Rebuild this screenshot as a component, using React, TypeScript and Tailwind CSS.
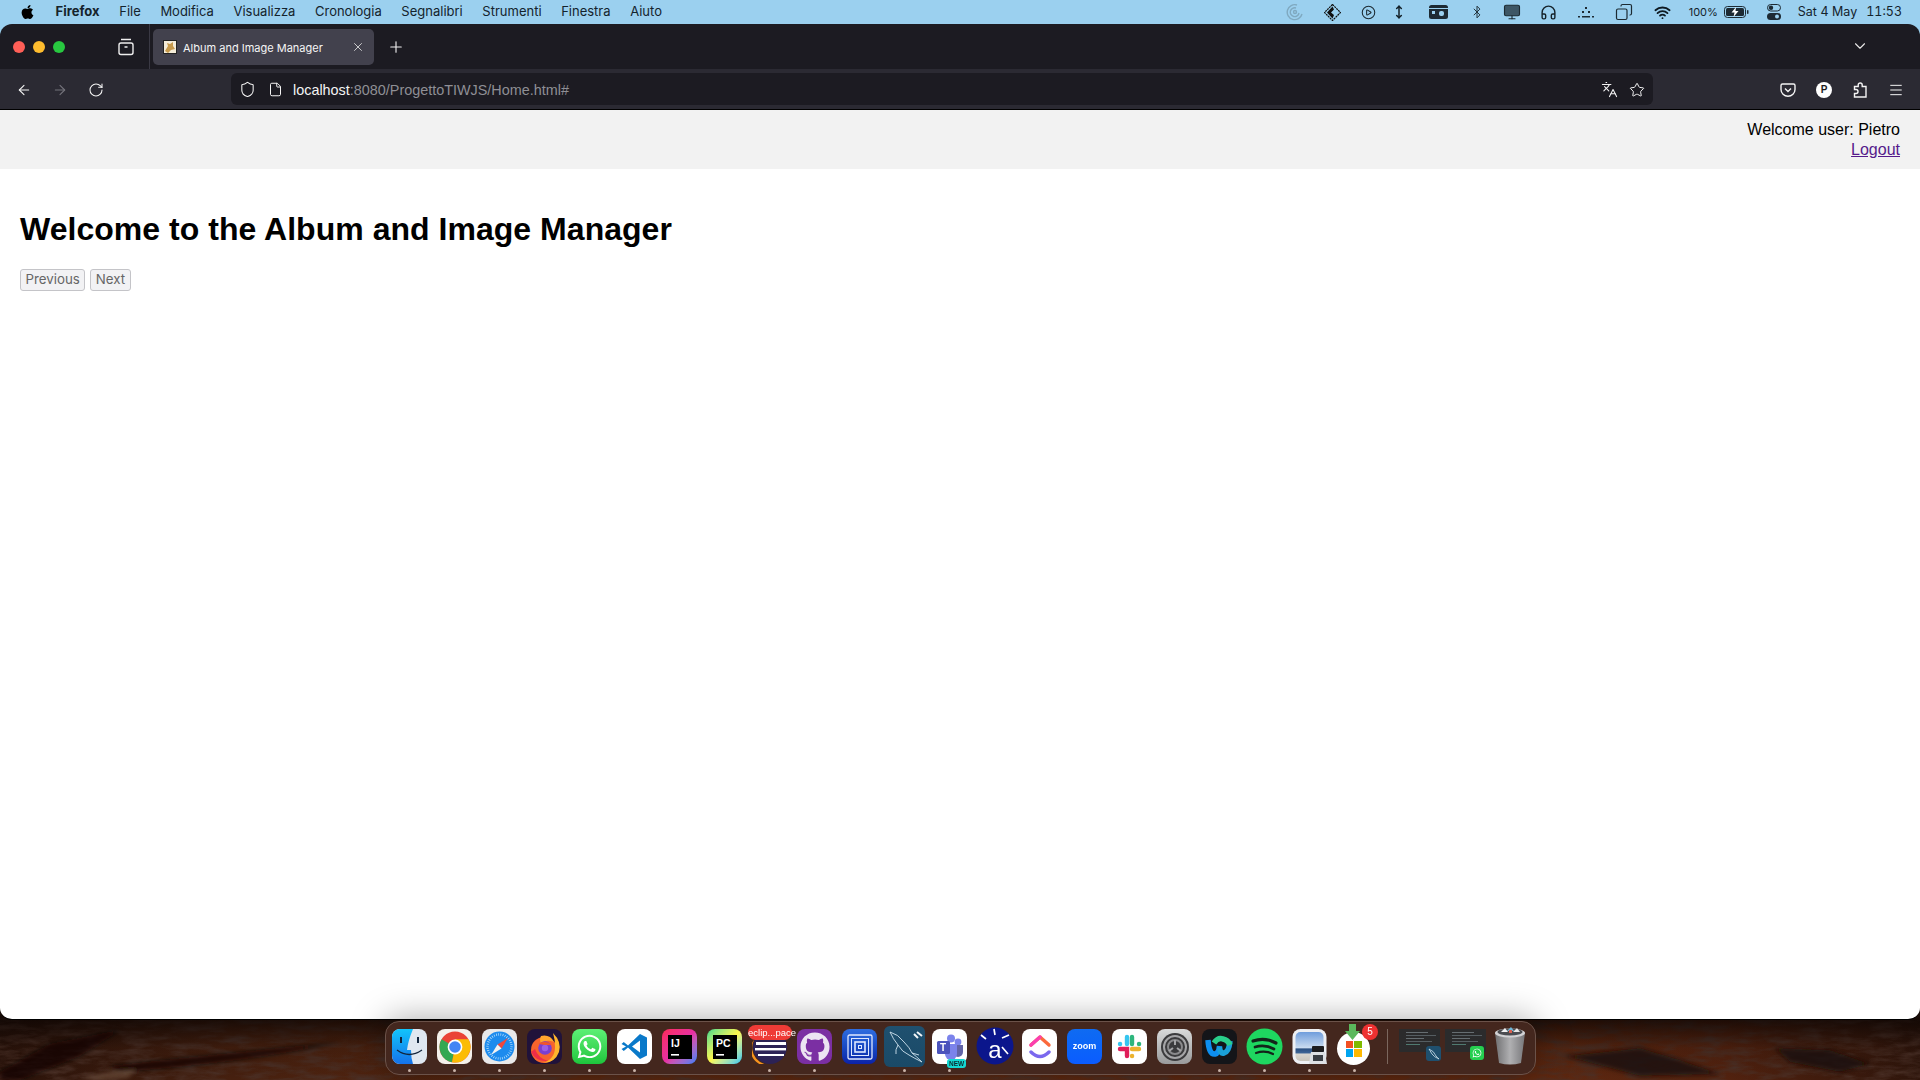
import type { ReactNode } from "react";
import {
  ArrowLeft,
  ArrowRight,
  Bluetooth,
  ChevronDown,
  CirclePlay,
  Copy,
  File,
  Headphones,
  Languages,
  Menu,
  Monitor,
  MoveVertical,
  Plus,
  RotateCw,
  Shield,
  Star,
  Wifi,
  X,
} from "lucide-react";
import { FaApple, FaGithub, FaWhatsapp } from "react-icons/fa";

const Wallpaper = () => (
  <svg className="absolute left-0 top-[1000px] h-[80px] w-[1920px]" viewBox="0 0 1920 80">
    <defs>
      <linearGradient id="rock" x1="0" y1="0" x2="1" y2="0">
        <stop offset="0" stopColor="#2a130a" />
        <stop offset="0.12" stopColor="#46200f" />
        <stop offset="0.3" stopColor="#5c2810" />
        <stop offset="0.8" stopColor="#5f2810" />
        <stop offset="0.9" stopColor="#52220f" />
        <stop offset="1" stopColor="#2e150b" />
      </linearGradient>
      <linearGradient id="shade" x1="0" y1="0" x2="0" y2="1">
        <stop offset="0.25" stopColor="#0c0503" stopOpacity="0.75" />
        <stop offset="0.6" stopColor="#0c0503" stopOpacity="0.15" />
        <stop offset="1" stopColor="#0c0503" stopOpacity="0" />
      </linearGradient>
      <filter id="grain">
        <feTurbulence type="fractalNoise" baseFrequency="0.04 0.16" numOctaves="5" seed="8" />
        <feColorMatrix values="0 0 0 0 0.07  0 0 0 0 0.03  0 0 0 0 0.02  2.2 0 0 0 -0.85" />
      </filter>
      <filter id="soft">
        <feGaussianBlur stdDeviation="2" />
      </filter>
    </defs>
    <rect width="1920" height="80" fill="url(#rock)" />
    <rect width="1920" height="80" filter="url(#grain)" />
    <rect width="1920" height="80" fill="url(#shade)" />
    <g filter="url(#soft)">
      <path d="M0 72 L50 44 L120 30 L80 56 L20 80 L0 80Z" fill="#120806" opacity="0.7" />
      <path d="M120 72 Q250 62 340 42 Q220 54 110 66Z" fill="#140905" opacity="0.7" />
      <path d="M80 78 L110 72 L136 70 L128 78 L100 80Z" fill="#7a5c48" opacity="0.55" />
      <path d="M1565 56 L1640 48 L1680 60 L1720 74 L1640 76Z" fill="#1b0d09" opacity="0.8" />
      <path d="M1775 48 L1830 50 L1870 64 L1840 72 L1790 62Z" fill="#1b0d09" opacity="0.8" />
    </g>
  </svg>
);

const MenuBar = () => (
  <div className="flex h-6 items-center justify-between pl-5 pr-[18px] text-[13px] text-[#14232c]">
    <div className="flex items-center gap-[19.6px]">
      <FaApple className="mr-[1px] h-[16px] w-[15px] text-black" />
      <span className="font-bold">Firefox</span>
      {["File", "Modifica", "Visualizza", "Cronologia", "Segnalibri", "Strumenti", "Finestra", "Aiuto"].map((m) => (
        <span key={m}>{m}</span>
      ))}
    </div>
    <div className="flex items-center">
      <svg className="mr-[20px] h-[18px] w-[18px] text-[#7fa9c0]" viewBox="0 0 18 18" fill="none" stroke="currentColor" strokeWidth="1.4">
        <path d="M16 11a7.5 7.5 0 1 1 -5-9" />
        <path d="M13 10a4.4 4.4 0 1 1 -3-5" />
        <circle cx="9" cy="9" r="1.5" />
      </svg>
      <svg className="mr-[20px] h-[17px] w-[17px]" viewBox="0 0 17 17">
        <path d="M8.5 0.5 L16.5 8.5 L8.5 16.5 L0.5 8.5Z" fill="none" stroke="#101010" strokeWidth="1.2" strokeDasharray="2 0.7" />
        <path d="M8.5 2.5 L3 8.5 L8.5 14.5 L10 11 L7 8.5 L10 5.5Z" fill="#101010" />
      </svg>
      <CirclePlay className="mr-[16px] h-[15px] w-[15px] text-[#1c2a32]" strokeWidth={1.7} />
      <MoveVertical className="mr-[23px] h-[18px] w-[14px] text-[#15222a]" strokeWidth={2.6} />
      <svg className="mr-[22px] h-[16px] w-[19px]" viewBox="0 0 19 16">
        <rect y="1" width="19" height="14" rx="2.5" fill="#1d2a33" />
        <rect x="3" y="7" width="3" height="3" fill="#9bd0ef" />
        <rect x="10" y="7" width="5" height="5" rx="2" fill="#9bd0ef" />
        <rect y="4" width="19" height="1" fill="#9bd0ef" />
      </svg>
      <Bluetooth className="mr-[19px] h-[18px] w-[14px] text-[#1c2a32]" strokeWidth={1.6} />
      <Monitor className="mr-[19px] h-[18px] w-[18px] fill-[#3d5665] text-[#1c2a32]" strokeWidth={1.5} />
      <Headphones className="mr-[20px] h-[17px] w-[17px] text-[#15222a]" strokeWidth={2} />
      <svg className="mr-[20px] h-[14px] w-[18px]" viewBox="0 0 18 14" fill="#1d2a33">
        <rect x="8" y="2" width="2" height="2" />
        <rect x="5" y="6" width="2" height="2" />
        <rect x="11" y="6" width="2" height="2" />
        <rect x="1" y="11" width="2" height="1.5" />
        <rect x="5" y="11" width="8" height="1.5" />
        <rect x="15" y="11" width="2" height="1.5" />
      </svg>
      <Copy className="mr-[21px] h-[18px] w-[18px] -scale-x-100 text-[#1c2a32]" strokeWidth={1.6} />
      <Wifi className="mr-[18px] h-[17px] w-[17px] text-[#0e1a22]" strokeWidth={2.6} />
      <span className="mr-[6px] text-[11px]">100%</span>
      <svg className="mr-[18px] h-[12px] w-[25px]" viewBox="0 0 25 12">
        <rect x="0.5" y="0.5" width="21" height="11" rx="3" fill="none" stroke="#1d2a33" />
        <rect x="2" y="2" width="18" height="8" rx="1.5" fill="#1d2a33" />
        <path d="M12 1 L7.5 6.5 H10.5 L9.5 11 L14.5 5 H11.5Z" fill="#fff" />
        <rect x="23" y="4" width="1.5" height="4" rx="0.7" fill="#1d2a33" />
      </svg>
      <svg className="mr-[17px] h-[16px] w-[14px]" viewBox="0 0 14 16">
        <rect x="0.5" y="0.5" width="13" height="6.5" rx="3.2" fill="none" stroke="#1d2a33" />
        <circle cx="4" cy="3.7" r="2.2" fill="#1d2a33" />
        <rect y="9" width="14" height="7" rx="3.5" fill="#1d2a33" />
        <circle cx="10" cy="12.5" r="2" fill="#9bd0ef" />
      </svg>
      <span className="mr-[9px] text-[12.5px]">Sat 4 May</span>
      <span className="text-[12.5px] tabular-nums">11:53</span>
    </div>
  </div>
);

const TabStrip = () => (
  <div className="flex h-[45px] items-center bg-[#1c1b22] pt-[1px] text-white">
    <div className="flex w-[126px] gap-2 pl-[13px]">
      <span className="h-3 w-3 rounded-full bg-[#ff5f57]" />
      <span className="h-3 w-3 rounded-full bg-[#febc2e]" />
      <span className="h-3 w-3 rounded-full bg-[#28c840]" />
    </div>
    <svg className="mr-[14px] h-[18px] w-[18px] -translate-x-[9px]" viewBox="0 0 18 18" fill="none" stroke="#eee" strokeWidth="1.4">
      <path d="M4 1.5 H14" />
      <rect x="2" y="5" width="14" height="11.5" rx="2" />
      <path d="M7.5 9 H10.5" />
    </svg>
    <div className="-mt-[1px] h-[45px] w-px -translate-x-[9px] bg-[#3a3944]" />
    <div className="ml-[-6px] flex h-9 w-[221px] items-center rounded-[5px] bg-[#42414d] pl-[10px] pr-[9px]">
      <svg className="h-[14px] w-[14px] shrink-0" viewBox="0 0 14 14">
        <rect width="14" height="14" fill="#f4ecd8" />
        <path d="M2 11 L5 6 L4 3 L7 4 L10 2 L10 6 L12 9 L8 10 L5 13Z" fill="#c79a4b" />
        <rect x="0.5" y="0.5" width="13" height="13" fill="none" stroke="#222" />
      </svg>
      <span className="ml-[6px] flex-1 translate-y-[1px] text-[11px] text-[#f5f5f5]">Album and Image Manager</span>
      <X className="h-[14px] w-[14px] text-[#e8e8e8]" strokeWidth={1.4} />
    </div>
    <Plus className="ml-[13px] h-[18px] w-[18px] text-[#f0f0f0]" strokeWidth={1.5} />
    <div className="flex-1" />
    <ChevronDown className="mr-[51px] h-[18px] w-[18px] -translate-y-[1px] text-[#e8e8e8]" strokeWidth={1.5} />
  </div>
);

const Toolbar = () => (
  <div className="flex h-10 items-center bg-[#2b2a33] text-[#f4f4f4]">
    <div className="flex w-[231px] items-center gap-[20px] pl-[16px] pt-[1px]">
      <ArrowLeft className="h-4 w-4" strokeWidth={1.6} />
      <ArrowRight className="h-4 w-4 text-[#75747c]" strokeWidth={1.6} />
      <RotateCw className="h-4 w-4" strokeWidth={1.6} />
    </div>
    <div className="flex h-8 w-[1422px] items-center rounded-[6px] bg-[#1c1b22] pl-[8px] pr-[8px] pt-[1px]">
      <Shield className="h-[17px] w-[17px]" strokeWidth={1.5} />
      <File className="ml-[12px] h-[15px] w-[15px]" strokeWidth={1.6} />
      <span className="ml-[10px] flex-1 translate-y-[1px] text-[14.4px] leading-none">
        localhost<span className="text-[#8f8f95]">:8080/ProgettoTIWJS/Home.html#</span>
      </span>
      <Languages className="h-[17px] w-[17px]" strokeWidth={1.5} />
      <Star className="ml-[11px] h-4 w-4" strokeWidth={1.5} />
    </div>
    <div className="flex flex-1 items-center justify-end gap-[20px] pr-[16px] pt-[1px]">
      <svg className="h-4 w-4" viewBox="0 0 16 16" fill="none" stroke="#f4f4f4" strokeWidth="1.4">
        <path d="M2.5 2 H13.5 A1.5 1.5 0 0 1 15 3.5 V7.5 A7 6.8 0 0 1 1 7.5 V3.5 A1.5 1.5 0 0 1 2.5 2Z" />
        <path d="M5 6.5 L8 9.5 L11 6.5" />
      </svg>
      <div className="flex h-4 w-4 items-center justify-center rounded-full bg-white text-[10px] font-bold text-[#1c1b22]">P</div>
      <svg className="h-4 w-4" viewBox="0 0 16 16" fill="none" stroke="#f4f4f4" strokeWidth="1.4">
        <path d="M6.2 4.5 V3 a2 2 0 0 1 4 0 V4.5 H14 V15 H2.5 V11.5 H4 a2 2 0 0 0 0-4 H2.5 V4.5Z" />
      </svg>
      <Menu className="h-4 w-4" strokeWidth={1.5} />
    </div>
  </div>
);

const PageButton = ({ label }: { label: string }) => (
  <button
    className="h-[22px] rounded-[3px] border border-[#c4c4c8] bg-[#f2f2f4] px-[4.5px] text-[13.3px] leading-none text-[#666]"
    style={{ fontFamily: "Inter, sans-serif" }}
  >
    {label}
  </button>
);

const Page = () => (
  <div className="flex-1 bg-white text-black">
    <div className="bg-[#f2f2f2] px-5 pb-[9px] pt-[10px] text-right text-base leading-5">
      <div>Welcome user: Pietro</div>
      <a href="#" className="text-[#551a8b] underline">
        Logout
      </a>
    </div>
    <div className="px-5">
      <h1 className="mt-[42px] text-[32px] font-bold leading-[37px] tracking-[0.03px]">
        Welcome to the Album and Image Manager
      </h1>
      <div className="mt-[21px] flex gap-[5px]">
        <PageButton label="Previous" />
        <PageButton label="Next" />
      </div>
    </div>
  </div>
);

const Tile = ({ className, children }: { className: string; children?: ReactNode }) => (
  <div className={`relative flex h-[35px] w-[35px] items-center justify-center overflow-hidden rounded-[8px] ${className}`}>
    {children}
  </div>
);

const Finder = () => (
  <svg className="h-[35px] w-[35px]" viewBox="0 0 35 35">
    <defs>
      <linearGradient id="finderL" x1="0" y1="0" x2="0" y2="1">
        <stop offset="0" stopColor="#12c4fb" />
        <stop offset="1" stopColor="#1572ea" />
      </linearGradient>
    </defs>
    <rect width="35" height="35" rx="8" fill="#dfe7f0" />
    <path d="M8 0 H21 Q16 12 15 21 H19 Q19 29 21 35 H8 A8 8 0 0 1 0 27 V8 A8 8 0 0 1 8 0Z" fill="url(#finderL)" />
    <rect x="8" y="8" width="2" height="6" fill="#12253d" />
    <rect x="25" y="8" width="2" height="6" fill="#12253d" />
    <path d="M5 21 Q17 30 30 21" fill="none" stroke="#12253d" strokeWidth="1.3" />
  </svg>
);

const Chrome = () => (
  <Tile className="bg-[#f4f0ea]">
    <svg className="h-[32px] w-[32px]" viewBox="0 0 32 32">
      <circle cx="16" cy="16" r="15.5" fill="#ea4335" />
      <path d="M16 16 L2.6 8.2 A15.5 15.5 0 0 0 13 31.2Z" fill="#34a853" />
      <path d="M16 16 L13 31.2 A15.5 15.5 0 0 0 29.4 8.2 L16 8.2Z" fill="#fbbc04" />
      <circle cx="16" cy="16" r="7.4" fill="#fff" />
      <circle cx="16" cy="16" r="5.8" fill="#4285f4" />
    </svg>
  </Tile>
);

const Safari = () => (
  <Tile className="bg-[#e9e9ea]">
    <svg className="h-[31px] w-[31px]" viewBox="0 0 31 31">
      <circle cx="15.5" cy="15.5" r="15" fill="#1d8bee" />
      <circle cx="15.5" cy="15.5" r="12" fill="none" stroke="#bfe2fb" strokeWidth="2.4" strokeDasharray="0.7 1.5" />
      <path d="M24 7 L13.5 13.5 L17.5 17.5Z" fill="#f2473c" />
      <path d="M7 24 L13.5 13.5 L17.5 17.5Z" fill="#f2f2f2" />
    </svg>
  </Tile>
);

const Firefox = () => (
  <Tile className="bg-[#20123a]">
    <svg className="h-[34px] w-[34px]" viewBox="0 0 34 34">
      <circle cx="16" cy="20" r="13" fill="#f7642c" />
      <path d="M25 3 Q34 12 31 22 Q27 33 15 33 Q27 29 27 17 Q27 9 25 3Z" fill="#ffb52d" />
      <path d="M13 6 Q22 4 26 12 Q19 9 13 13 Q11 10 13 6Z" fill="#ffa52e" />
      <circle cx="17" cy="18" r="6.8" fill="#7a3fcf" />
      <circle cx="17" cy="18" r="3.2" fill="#9a5fe6" />
      <path d="M10.5 14 Q17 9 24 15 L17 15Z" fill="#f0562c" />
      <path d="M3 22 Q8 32 20 31 Q10 28 7 19Z" fill="#ed2d48" />
    </svg>
  </Tile>
);

const VSCode = () => (
  <Tile className="bg-white">
    <svg className="h-[27px] w-[27px]" viewBox="0 0 27 27">
      <path d="M19 1 L26 4.5 V22.5 L19 26 L7 14.5 L2.8 18 L0.5 16 L5 13.5 L0.5 11 L2.8 9 L7 12.5Z M19 7.5 L11 13.5 L19 19.5Z" fill="#0a79c9" fillRule="evenodd" />
    </svg>
  </Tile>
);

const JetBrains = ({ label, colors }: { label: string; colors: string }) => (
  <div className={`relative flex h-[35px] w-[35px] items-center justify-center rounded-[8px] ${colors}`}>
    <svg className="h-[24px] w-[24px]" viewBox="0 0 24 24">
      <rect width="24" height="24" fill="#000" />
      <text x="3" y="12" fill="#fff" fontSize="10.5" fontWeight="700" fontFamily="Liberation Sans, sans-serif">
        {label}
      </text>
      <rect x="3" y="19" width="8" height="1.6" fill="#fff" />
    </svg>
  </div>
);

const Eclipse = () => (
  <div className="relative h-[35px] w-[35px]">
    <svg className="absolute left-0 top-0 h-[35px] w-[35px]" viewBox="0 0 35 35">
      <circle cx="18" cy="18" r="17" fill="#2c2255" />
      <path d="M2 11 A17 17 0 0 0 22 35 A16 16 0 0 1 2 11Z" fill="#f7941e" />
      <rect x="4" y="13" width="30" height="3" fill="#fff" />
      <rect x="3" y="19" width="31" height="2.4" fill="#fff" />
      <rect x="6" y="25" width="26" height="2" fill="#fff" />
    </svg>
    <div className="absolute -left-[4px] -right-[5px] -top-[4px] rounded-full bg-[#ef3b36] text-center text-[9.5px] leading-[15px] text-white">
      eclip...pace
    </div>
  </div>
);

const Squares = () => (
  <Tile className="bg-gradient-to-b from-[#2f6de0] to-[#0d22a8]">
    <svg className="h-[26px] w-[26px]" viewBox="0 0 26 26" fill="none" stroke="#dfe8ff">
      <rect x="1" y="1" width="24" height="24" rx="1.5" strokeWidth="1.3" />
      <rect x="4.5" y="4.5" width="17" height="17" strokeWidth="1" />
      <rect x="8" y="8" width="10" height="10" strokeWidth="1.6" />
      <rect x="11.5" y="11.5" width="3" height="3" strokeWidth="1" />
    </svg>
  </Tile>
);

const MySql = () => (
  <div className="-mx-[3px] -mt-[3px] flex h-[41px] w-[41px] items-center justify-center rounded-[6px] bg-gradient-to-b from-[#1f506f] to-[#1a4a68]">
    <svg className="h-[41px] w-[41px]" viewBox="0 0 41 41" fill="none" stroke="#cfe2ee" strokeWidth="0.9">
      <path d="M6 6 Q14 8 20 16 Q26 22 28 27 Q32 30 38 36 Q30 32 25 29 Q18 26 14 19 Q9 13 6 6Z" />
      <path d="M14 19 Q11 24 12 28" />
      <path d="M28 27 L35 29" />
      <path d="M30 8 L34 12 M33 6 L38 10" stroke="#f1f5f7" strokeWidth="2" />
    </svg>
  </div>
);

const Teams = () => (
  <div className="relative h-[35px] w-[35px]">
    <Tile className="bg-white">
      <svg className="h-[28px] w-[28px]" viewBox="0 0 28 28">
        <circle cx="22" cy="9" r="3.4" fill="#7b83eb" />
        <circle cx="15" cy="5.5" r="4" fill="#7b83eb" />
        <path d="M17 12 H27 V19 A5 5 0 0 1 17 19Z" fill="#6264a7" />
        <path d="M9 11 H21 V21 A6 6 0 0 1 9 21Z" fill="#7b83eb" />
        <rect x="1" y="8" width="13" height="13" rx="1.5" fill="#4b53bc" />
        <text x="4" y="18" fill="#fff" fontSize="10" fontWeight="700" fontFamily="Liberation Sans, sans-serif">
          T
        </text>
      </svg>
    </Tile>
    <div className="absolute -bottom-[4px] left-[15px] rounded-[3px] bg-[#13d8d2] px-[2px] text-[6.5px] font-bold leading-[9px] text-[#0b2c30]">
      NEW
    </div>
  </div>
);

const Aruba = () => (
  <svg className="-mx-[2px] -mt-[2px] h-[38px] w-[38px]" viewBox="0 0 38 38">
    <circle cx="19" cy="19" r="18.5" fill="#0b168c" />
    <path d="M18 2 L19 8 M5 8 L10 12 M33 8 L26 11 M32 27 L26 20" stroke="#fff" strokeWidth="1.7" />
    <text x="19" y="31" textAnchor="middle" fill="#fff" fontSize="24" fontFamily="Liberation Sans, sans-serif">
      a
    </text>
  </svg>
);

const ClickUp = () => (
  <Tile className="bg-white">
    <svg className="h-[26px] w-[26px]" viewBox="0 0 26 26" fill="none" strokeWidth="3.4" strokeLinejoin="round" strokeLinecap="round">
      <path d="M4 11 L13 3 L22 11" stroke="#fb6a3c" />
      <path d="M4 11 L13 3" stroke="#fb3fb0" />
      <path d="M4 18 Q13 27 22 18" stroke="#7b68ee" />
    </svg>
  </Tile>
);

const Slack = () => (
  <Tile className="bg-white">
    <svg className="h-[25px] w-[25px]" viewBox="0 0 25 25" strokeWidth="4.4" strokeLinecap="round" fill="none">
      <path d="M10 3 V10 M3 10 H3.1" stroke="#36c5f0" />
      <path d="M15 3 V10 M22 10 H22.1" stroke="#2eb67d" />
      <path d="M15 15 H22 M15 22 H15.1" stroke="#ecb22e" />
      <path d="M3 15 H10 V22" stroke="#e01e5a" />
    </svg>
  </Tile>
);

const Settings = () => (
  <Tile className="bg-gradient-to-b from-[#d9dada] to-[#9a9b9c]">
    <svg className="h-[32px] w-[32px]" viewBox="0 0 32 32" fill="none">
      <circle cx="16" cy="16" r="14" fill="#3b3b3d" />
      <circle cx="16" cy="16" r="11" stroke="#a5a5a7" strokeWidth="2" />
      <circle cx="16" cy="16" r="7" stroke="#8a8a8c" strokeWidth="2" />
      <path d="M16 9 V14 M10 20 L14 17 M22 20 L18 17" stroke="#a5a5a7" strokeWidth="2" />
    </svg>
  </Tile>
);

const Webex = () => (
  <Tile className="bg-[#141519]">
    <svg className="h-[31px] w-[31px]" viewBox="0 0 31 31" fill="none" strokeWidth="5.5">
      <path d="M4 9 Q5 24 11 23 Q15 22 15.5 15" stroke="#0d8ff0" />
      <path d="M15.5 16 Q16 23 20 22 Q25 21 26 10" stroke="#1aa0d8" />
      <path d="M10 12 Q14 6 19 8 Q24 9 26 14" stroke="#29cf8b" />
    </svg>
  </Tile>
);

const Spotify = () => (
  <svg className="-mx-[1px] -mt-[1px] h-[37px] w-[37px]" viewBox="0 0 37 37" fill="none" stroke="#13241a" strokeLinecap="round">
    <circle cx="18.5" cy="18.5" r="18" fill="#1ed760" stroke="none" />
    <path d="M7 13 Q19 9 30 15" strokeWidth="3.2" />
    <path d="M9 19 Q19 16 28 21" strokeWidth="2.7" />
    <path d="M10 25 Q19 22 27 26" strokeWidth="2.2" />
  </svg>
);

const Preview = () => (
  <svg className="h-[36px] w-[36px]" viewBox="0 0 36 36">
    <defs>
      <linearGradient id="sky" x1="0" y1="0" x2="0" y2="1">
        <stop offset="0" stopColor="#6f9ddc" />
        <stop offset="0.55" stopColor="#cbdcf0" />
        <stop offset="0.58" stopColor="#2b4f80" />
        <stop offset="0.72" stopColor="#3e6596" />
        <stop offset="0.76" stopColor="#d9d6cf" />
        <stop offset="1" stopColor="#c8c4bb" />
      </linearGradient>
    </defs>
    <rect x="0.5" y="0" width="34" height="35" rx="8" fill="#eef0f4" />
    <rect x="3.5" y="3" width="28" height="29" rx="5" fill="url(#sky)" />
    <rect x="20" y="17" width="12" height="6" rx="1" fill="#1d1d1f" />
    <path d="M19 23 H33 L35 35 H17Z" fill="#dde0e4" />
    <rect x="21" y="26" width="10" height="6" fill="#3a3e44" />
  </svg>
);

const Office = () => (
  <div className="relative h-[35px] w-[35px]">
    <div className="flex h-[33px] w-[33px] translate-y-[3px] items-center justify-center rounded-full bg-white">
      <div className="grid h-[16px] w-[16px] grid-cols-2 gap-[1px]">
        <span className="bg-[#f25022]" />
        <span className="bg-[#7fba00]" />
        <span className="bg-[#00a4ef]" />
        <span className="bg-[#ffb900]" />
      </div>
    </div>
    <svg className="absolute -top-[5px] left-[8px] h-[16px] w-[15px]" viewBox="0 0 15 16">
      <path d="M4 0 H11 V7 H15 L7.5 16 L0 7 H4Z" fill="#5bb85c" />
    </svg>
    <div className="absolute -right-[6px] -top-[5px] h-4 w-4 rounded-full bg-[#ee3131] text-center text-[10px] leading-4 text-white">5</div>
  </div>
);

const Thumb = ({ children }: { children: ReactNode }) => (
  <div className="relative h-[35px] w-[41px]">
    <div className="flex h-[23px] w-[41px] flex-col gap-[2px] bg-[#2b2b2c] py-[3px] pl-[7px]">
      <span className="h-[1px] w-[22px] bg-[#666d71]" />
      <span className="h-[1px] w-[30px] bg-[#555d61]" />
      <span className="h-[1px] w-[18px] bg-[#666d71]" />
      <span className="h-[1px] w-[26px] bg-[#555d61]" />
      <span className="h-[1px] w-[14px] bg-[#4f7a70]" />
    </div>
    {children}
  </div>
);

const Trash = () => (
  <svg className="-mt-[3px] h-[39px] w-[32px]" viewBox="0 0 32 39">
    <defs>
      <linearGradient id="bin" x1="0" y1="0" x2="1" y2="0">
        <stop offset="0" stopColor="#6f6f71" />
        <stop offset="0.5" stopColor="#b0b0b2" />
        <stop offset="1" stopColor="#77777a" />
      </linearGradient>
    </defs>
    <path d="M1 7 H31 L27 37 Q16 40 5 37Z" fill="url(#bin)" />
    <ellipse cx="16" cy="7" rx="15" ry="4.5" fill="#d2d2d4" />
    <ellipse cx="16" cy="6" rx="12.5" ry="3.4" fill="#4b4c50" />
    <path d="M7 6 L11 2 L14 6Z" fill="#f2f2f2" />
    <path d="M13 5 L17 1 L20 5Z" fill="#6fb7d8" />
    <path d="M19 6 L23 2 L26 6Z" fill="#e8e8e8" />
    <rect x="15" y="4" width="3" height="3" fill="#d8604f" />
  </svg>
);

const dockApps: { key: string; icon: ReactNode; running?: boolean }[] = [
  { key: "finder", icon: <Finder />, running: true },
  { key: "chrome", icon: <Chrome />, running: true },
  { key: "safari", icon: <Safari />, running: true },
  { key: "firefox", icon: <Firefox />, running: true },
  {
    key: "whatsapp",
    icon: (
      <Tile className="bg-gradient-to-b from-[#5cf075] to-[#1cc53c]">
        <FaWhatsapp className="h-[27px] w-[27px] text-white" />
      </Tile>
    ),
    running: true,
  },
  { key: "vscode", icon: <VSCode />, running: true },
  { key: "idea", icon: <JetBrains label="IJ" colors="bg-gradient-to-br from-[#fe2857] via-[#e72fa2] to-[#087cfa]" /> },
  { key: "pycharm", icon: <JetBrains label="PC" colors="bg-gradient-to-br from-[#21d789] via-[#fcf84a] to-[#07c3f2]" /> },
  { key: "eclipse", icon: <Eclipse />, running: true },
  {
    key: "github",
    icon: (
      <Tile className="bg-[#7b2fa3]">
        <FaGithub className="h-[30px] w-[30px] text-[#ece4f2]" />
      </Tile>
    ),
    running: true,
  },
  { key: "squares", icon: <Squares /> },
  { key: "mysql", icon: <MySql />, running: true },
  { key: "teams", icon: <Teams />, running: true },
  { key: "aruba", icon: <Aruba /> },
  { key: "clickup", icon: <ClickUp /> },
  {
    key: "zoom",
    icon: (
      <Tile className="bg-gradient-to-b from-[#0f6bf2] to-[#0b5cff]">
        <span className="text-[9px] font-semibold text-white">zoom</span>
      </Tile>
    ),
  },
  { key: "slack", icon: <Slack /> },
  { key: "settings", icon: <Settings /> },
  { key: "webex", icon: <Webex />, running: true },
  { key: "spotify", icon: <Spotify />, running: true },
  { key: "preview", icon: <Preview />, running: true },
  { key: "office", icon: <Office />, running: true },
];

const DockItem = ({ icon, running }: { icon: ReactNode; running?: boolean }) => (
  <div className="flex w-[35px] flex-col items-center">
    <div className="flex h-[35px] items-start">{icon}</div>
    <span className={`mt-[5px] h-[3px] w-[3px] rounded-full ${running ? "bg-[#c9b3a8]" : ""}`} />
  </div>
);

const Dock = () => (
  <div className="absolute left-[385px] top-[1021px] flex h-[54px] w-[1151px] gap-[10px] rounded-[14px] border border-[#6b5249] bg-[#44271e] pl-[6px] pt-[7px] shadow-[0_-2px_34px_rgba(0,0,0,0.34)]">
    {dockApps.map((a) => (
      <DockItem key={a.key} icon={a.icon} running={a.running} />
    ))}
    <div className="ml-[5px] mr-[1px] h-[35px] w-px bg-[#7b675e]" />
    <div className="flex gap-[5px]">
      <Thumb>
        <div className="absolute bottom-[3px] -right-[1px] h-[15px] w-[15px] rounded-[3px] bg-[#1f506f]">
          <svg className="h-[15px] w-[15px]" viewBox="0 0 15 15" fill="none" stroke="#cfe2ee" strokeWidth="0.8">
            <path d="M3 3 Q8 5 10 10 Q12 12 13 13 Q8 11 6 8Z" />
          </svg>
        </div>
      </Thumb>
      <Thumb>
        <div className="absolute bottom-[4px] right-[2px] flex h-[14px] w-[14px] items-center justify-center rounded-[3px] bg-[#25d050]">
          <FaWhatsapp className="h-[10px] w-[10px] text-white" />
        </div>
      </Thumb>
    </div>
    <div className="ml-[-2px]">
      <Trash />
    </div>
  </div>
);

const App = () => {
  return (
    <div
      className="relative flex h-[1080px] w-[1920px] flex-col overflow-hidden bg-[#9bd0ef]"
      style={{ fontFamily: "'Liberation Sans', Arial, sans-serif" }}
    >
      <Wallpaper />
      <div className="relative" style={{ fontFamily: "Inter, sans-serif" }}>
        <MenuBar />
      </div>
      <div className="relative flex h-[996px] flex-col overflow-hidden rounded-[12px] border-b border-black">
        <div style={{ fontFamily: "Inter, sans-serif" }}>
          <TabStrip />
        </div>
        <Toolbar />
        <div className="h-px bg-black" />
        <Page />
      </div>
      <Dock />
    </div>
  );
};

export default App;
